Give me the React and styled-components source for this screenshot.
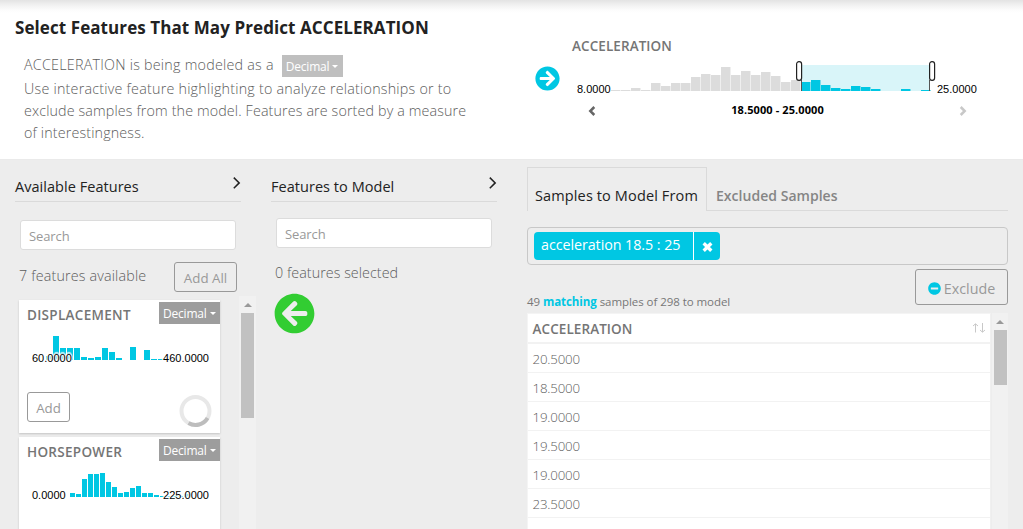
import React from 'react';
import styled, { createGlobalStyle } from 'styled-components';
import { FaArrowCircleLeft, FaArrowCircleRight, FaMinusCircle } from 'react-icons/fa';

const cyan = '#00c7e3';
const face = '"Open Sans", "Noto Sans", sans-serif';

const Global = createGlobalStyle`
  * { box-sizing: border-box; }
  body { margin: 0; background: #ededed; font-family: ${face}; color: #777; }
  svg { display: block; flex: none; }
`;

const Page = styled.div`
  height: 529px;
  overflow: hidden;
  background: #ededed;
`;

const Header = styled.header`
  display: flex;
  height: 159px;
  background: linear-gradient(#e3e3e3 0, #f1f1f1 5px, #fcfcfc 10px, #fff 13px);
`;

const Intro = styled.div`
  width: 535px;
  padding: 16px 0 0 15px;
`;

const Title = styled.h1`
  margin: 0;
  font-size: 17px;
  line-height: 24px;
  font-weight: 700;
  letter-spacing: 0.08px;
  color: #222;
  white-space: nowrap;
`;

const Copy = styled.div`
  padding: 15px 0 0 9px;
  font-size: 14.3px;
  font-weight: 300;
  color: #5c5c5c;
`;

const Line = styled.div`
  display: flex;
  align-items: flex-start;
  height: ${(p) => p.$h || 22}px;
  line-height: ${(p) => (p.$h ? 20 : 22)}px;
  white-space: nowrap;
  letter-spacing: ${(p) => p.$ls || 0}px;
`;

const TypeButton = styled.button`
  display: flex;
  align-items: center;
  gap: 3px;
  width: 61px;
  height: 22px;
  margin: ${(p) => p.$m || '0'};
  padding: 1px 0 0 4px;
  border: 0;
  background: ${(p) => (p.$pale ? '#bfbfbf' : '#9d9d9d')};
  color: #fff;
  font: 400 12px/21px ${face};
  letter-spacing: -0.2px;

  &::after {
    content: '';
    border: 3.5px solid transparent;
    border-top-color: #fff;
    border-bottom: 0;
  }
`;

const Target = styled.div`
  display: flex;
  color: ${cyan};
`;

const TargetIcon = styled.div`
  padding: 66px 0 0 0;
  width: 37px;
`;

const TargetBody = styled.div`
  padding-top: 36px;
  width: 410px;
`;

const FeatureName = styled.div`
  font-size: 13.5px;
  line-height: 20px;
  font-weight: 600;
  letter-spacing: ${(p) => p.$ls || 0}px;
  color: #757575;
  white-space: nowrap;
`;

const TargetChart = styled.div`
  display: flex;
  align-items: flex-end;
  height: 40px;
  padding-left: 5px;
  svg { margin-bottom: 4px; }
`;

const Tick = styled.span`
  width: ${(p) => p.$w || 'auto'};
  font: 400 11px/14px "Liberation Sans", sans-serif;
  color: #000;
`;

const RangeRow = styled.div`
  display: flex;
  align-items: center;
  justify-content: space-between;
  height: 22px;
  margin-top: 4px;
  padding: 0 15px 0 16px;
`;

const RangeText = styled.span`
  padding-bottom: 2px;
  font: 700 11px/14px ${face};
  letter-spacing: 0.1px;
  color: #000;
`;

const Body = styled.main`
  display: flex;
  height: 370px;
  padding-left: 15px;
  border-top: 1px solid #eaeaea;
`;

const Column = styled.section`
  width: 256px;
`;

const ColumnHead = styled.div`
  display: flex;
  justify-content: space-between;
  width: 226px;
  height: 42px;
  padding: 17px 0 0;
  border-bottom: 1px solid #dadada;
`;

const HeadText = styled.h2`
  margin: 0;
  font-size: 14.5px;
  line-height: 20px;
  font-weight: 500;
  letter-spacing: 0.04px;
  color: #222;
  white-space: nowrap;
`;

const Search = styled.input`
  display: block;
  width: 216px;
  height: 30px;
  margin: ${(p) => p.$top}px 0 0 5px;
  padding: 2px 8px 0;
  border: 1px solid #dcdcdc;
  border-radius: 3px;
  background: #fff;
  font: 400 13px ${face};
  letter-spacing: -0.1px;

  &::placeholder { color: #999; opacity: 1; }
`;

const CountRow = styled.div`
  display: flex;
  justify-content: space-between;
  width: 222px;
  margin-top: 12px;
  padding-left: 4px;
`;

const Count = styled.div`
  font-size: 14.3px;
  line-height: 20px;
  font-weight: 300;
  letter-spacing: ${(p) => p.$ls || 0}px;
  padding-top: ${(p) => p.$top || 0}px;
  color: #5c5c5c;
`;

const OutlineButton = styled.button`
  display: flex;
  align-items: center;
  justify-content: center;
  gap: 3px;
  width: ${(p) => p.$w}px;
  height: ${(p) => p.$h || 30}px;
  padding: 2px 0 0;
  border: 1px solid #999;
  border-radius: 3px;
  background: transparent;
  color: #999;
  font: 400 ${(p) => p.$size || 13.3}px ${face};
  svg { color: ${cyan}; }
`;

const FeatureList = styled.div`
  display: flex;
  height: 240px;
  margin-top: 4px;
  overflow: hidden;
`;

const Cards = styled.div`
  display: flex;
  flex-direction: column;
  gap: 4px;
  width: 224px;
  padding: 4px 0 0 4px;
`;

const Card = styled.article`
  flex: none;
  width: 201px;
  height: 133px;
  padding: 2px 0 0 8px;
  background: #fff;
  box-shadow: 0 1px 2px rgba(0, 0, 0, 0.18);
`;

const CardHead = styled.div`
  display: flex;
  justify-content: space-between;
  height: 28px;
  padding-top: 3px;
`;

const MiniPlot = styled.div`
  display: grid;
  height: 36px;
  > * { grid-area: 1 / 1; }
`;

const MiniTicks = styled.div`
  display: flex;
  justify-content: space-between;
  align-items: flex-end;
  padding: 0 11px 1px 5px;
  z-index: 1;
  ${Tick} {
    text-shadow: 0 0 1px #fff, 0 0 2px #fff, 0 0 2px #fff, 1px 0 1px #fff, -1px 0 1px #fff, 0 -2px 1px #fff, 0 0 3px #fff;
  }
`;

const CardFoot = styled.div`
  display: flex;
  justify-content: space-between;
  align-items: flex-start;
  padding: 26px 8px 0 0;
`;

const Spin = styled.div`
  padding-top: 3px;
`;

const Track = styled.div`
  display: flex;
  flex-direction: column;
  align-items: center;
  gap: 6px;
  width: ${(p) => p.$w}px;
  padding-top: 7px;
  background: #f1f1f1;

  &::before {
    content: '';
    border: 4px solid transparent;
    border-bottom-color: #999;
    border-top: 0;
  }
  &::after {
    content: '';
    width: 13px;
    height: ${(p) => p.$thumb}px;
    background: #c1c1c1;
  }
`;

const GreenArrow = styled.div`
  margin: 10px 0 0 3px;
  color: #32cd32;
`;

const Samples = styled.section`
  width: 481px;
`;

const Tabs = styled.div`
  display: flex;
  height: 51px;
  padding-top: 7px;
`;

const Tab = styled.div`
  width: ${(p) => (p.$active ? '180px' : 'auto')};
  flex: ${(p) => (p.$active ? 'none' : 1)};
  padding: ${(p) => (p.$active ? '18px 0 0 7px' : '19px 0 0 9px')};
  border: 1px solid #dadada;
  border-width: ${(p) => (p.$active ? '1px 1px 0 1px' : '0 0 1px 0')};
  font-size: ${(p) => (p.$active ? 14.5 : 14)}px;
  line-height: 20px;
  font-weight: ${(p) => (p.$active ? 500 : 600)};
  letter-spacing: ${(p) => (p.$active ? 0.13 : 0.03)}px;
  color: ${(p) => (p.$active ? '#222' : '#858585')};
  white-space: nowrap;
`;

const FilterBox = styled.div`
  height: 38px;
  margin-top: 16px;
  padding: 4px 6px;
  border: 1px solid #c8c8c8;
  border-radius: 4px;
`;

const Tag = styled.div`
  display: flex;
  width: 186px;
  height: 28px;
  border-radius: 4px;
  background: ${cyan};
  color: #fff;
  font-size: 14.3px;
  line-height: 25px;
`;

const TagText = styled.div`
  width: 160px;
  padding-left: 7px;
  border-right: 1px solid #fff;
  letter-spacing: -0.06px;
  white-space: nowrap;
`;

const TagClose = styled.div`
  padding: 10px 0 0 8px;
`;

const Summary = styled.div`
  display: flex;
  justify-content: space-between;
  height: 48px;
  padding-top: 4px;
`;

const Matching = styled.div`
  padding-top: 24px;
  font-size: 11.5px;
  line-height: 18px;
  font-weight: 400;
  letter-spacing: -0.06px;
  b { color: ${cyan}; font-weight: 700; }
`;

const TableWrap = styled.div`
  display: flex;
  justify-content: space-between;
  height: 217px;
  overflow: hidden;
  border-left: 1px solid #f4f4f4;
`;

const Table = styled.div`
  width: 463px;
  background: #fff;
  border-top: 1px solid #f4f4f4;
  border-right: 1px solid #f0f0f0;
`;

const TableHead = styled.div`
  display: flex;
  justify-content: space-between;
  height: 30px;
  padding: 5px 4px 0 4.5px;
  border-bottom: 2px solid #f2f2f2;
  svg { margin-top: 4px; }
`;

const Row = styled.div`
  height: 29px;
  padding: 1px 0 0 4.5px;
  border-bottom: 1px solid #f2f2f2;
  font-size: 13.3px;
  line-height: 28px;
  font-weight: 300;
  letter-spacing: -0.2px;
  color: #5c5c5c;
`;

function Bars({ data, pitch, base, split = 0, gapShade }) {
  return data.map((h, i) => {
    const on = i >= split;
    return h ? (
      <g key={i}>
        {gapShade && <rect x={i * pitch} y={base - h} width={pitch} height={h} fill={on ? '#7fdcea' : '#efefef'} />}
        <rect x={i * pitch} y={base - h} width={pitch - 1} height={h} fill={on ? cyan : '#dcdcdc'} />
      </g>
    ) : null;
  });
}

const targetData = [1, 1, 3, 1, 8, 5, 8, 8, 14, 17, 16, 24, 16, 20, 16, 19, 15, 9, 11, 9, 11, 6, 3, 2, 5, 4, 2, 0, 0, 2, 0, 1];

function TargetPlot() {
  return (
    <svg width="326" height="32" viewBox="0 0 326 32">
      <rect x="190" y="5" width="128" height="26" fill="#d9f5f9" />
      <Bars data={targetData} pitch={10} base={31} split={19} gapShade />
      <path d="M190.5 20V31M318.5 20V31" stroke="#555" />
      <rect x="185.6" y="1.6" width="5" height="18.8" rx="2.4" fill="#fff" stroke="#222" strokeWidth="1.2" />
      <rect x="318.6" y="1.6" width="5" height="18.8" rx="2.4" fill="#fff" stroke="#222" strokeWidth="1.2" />
    </svg>
  );
}

const Angle = ({ left, color }) => (
  <svg width="8" height="10" viewBox="0 0 8 10">
    <path d={left ? 'M6.3 1L2.3 5L6.3 9' : 'M1.7 1L5.7 5L1.7 9'} fill="none" stroke={color} strokeWidth="2.5" />
  </svg>
);

const Chevron = () => (
  <svg width="9" height="13" viewBox="0 0 9 13">
    <path d="M1.8 0.6L7.2 5.9L1.8 11.2" fill="none" stroke="#222" strokeWidth="1.5" />
  </svg>
);

const Cross = () => (
  <svg width="11" height="10" viewBox="0 0 11 10">
    <path d="M1.7 1.3L9.3 8.7M9.3 1.3L1.7 8.7" stroke="#fff" strokeWidth="3.4" />
  </svg>
);

const SortArrows = () => (
  <svg width="14" height="10" viewBox="0 0 14 10">
    <path d="M3.5 9.5V1M1 3L3.5 0.8L6 3M10.5 0V9M8 7L10.5 9.2L13 7" fill="none" stroke="#c8c8c8" />
  </svg>
);

const Spinner = () => (
  <svg width="33" height="33" viewBox="0 0 33 33">
    <circle cx="16.5" cy="16" r="14" fill="none" stroke="#e8e8e8" strokeWidth="4" />
    <path d="M28.6 23A14 14 0 0 1 9.5 28.1" fill="none" stroke="#bdbdbd" strokeWidth="4" />
  </svg>
);

const features = [
  { name: 'DISPLACEMENT', ls: 0.3, min: '60.0000', max: '460.0000', start: 19, pitch: 7,
    data: [4, 24, 12, 12, 12, 3, 2, 3, 12, 8, 2, 0, 13, 0, 10, 1, 1, 1, 1, 0, 1] },
  { name: 'HORSEPOWER', ls: 0.3, min: '0.0000', max: '225.0000', start: 43, pitch: 6,
    data: [4, 3, 18, 23, 23, 24, 15, 10, 4, 5, 9, 11, 4, 4, 2, 1, 1, 1, 1, 3] },
];

const samples = ['20.5000', '18.5000', '19.0000', '19.5000', '19.0000', '23.5000', '18.5000'];

export default function App() {
  return (
    <Page>
      <Global />
      <Header>
        <Intro>
          <Title>Select Features That May Predict ACCELERATION</Title>
          <Copy>
            <Line $h={23} $ls={0.24}>
              ACCELERATION is being modeled as a
              <TypeButton $pale $m="0 0 0 8px">Decimal</TypeButton>
            </Line>
            <Line $ls={0.23}>Use interactive feature highlighting to analyze relationships or to</Line>
            <Line $ls={0.13}>exclude samples from the model. Features are sorted by a measure</Line>
            <Line $ls={0.15}>of interestingness.</Line>
          </Copy>
        </Intro>
        <Target>
          <TargetIcon><FaArrowCircleRight size={25} /></TargetIcon>
          <TargetBody>
            <FeatureName $ls={0.08}>ACCELERATION</FeatureName>
            <TargetChart>
              <Tick $w="34px">8.0000</Tick>
              <TargetPlot />
              <Tick>25.0000</Tick>
            </TargetChart>
            <RangeRow>
              <Angle left color="#666" />
              <RangeText>18.5000 - 25.0000</RangeText>
              <Angle color="#c8c8c8" />
            </RangeRow>
          </TargetBody>
        </Target>
      </Header>
      <Body>
        <Column>
          <ColumnHead>
            <HeadText>Available Features</HeadText>
            <Chevron />
          </ColumnHead>
          <Search placeholder="Search" $top={18} />
          <CountRow>
            <Count $top={4} $ls={0.17}>7 features available</Count>
            <OutlineButton $w={63}>Add All</OutlineButton>
          </CountRow>
          <FeatureList>
            <Cards>
              {features.map((f) => (
                <Card key={f.name}>
                  <CardHead>
                    <FeatureName $ls={f.ls}>{f.name}</FeatureName>
                    <TypeButton $m="-3px 0 0 0">Decimal</TypeButton>
                  </CardHead>
                  <MiniPlot>
                    <svg width="193" height="36">
                      <g transform={`translate(${f.start} 0)`}>
                        <Bars data={f.data} pitch={f.pitch} base={30} />
                      </g>
                    </svg>
                    <MiniTicks><Tick>{f.min}</Tick><Tick>{f.max}</Tick></MiniTicks>
                  </MiniPlot>
                  <CardFoot>
                    <OutlineButton $w={43}>Add</OutlineButton>
                    <Spin><Spinner /></Spin>
                  </CardFoot>
                </Card>
              ))}
            </Cards>
            <Track $w={17} $thumb={105} />
          </FeatureList>
        </Column>
        <Column>
          <ColumnHead>
            <HeadText>Features to Model</HeadText>
            <Chevron />
          </ColumnHead>
          <Search placeholder="Search" $top={16} />
          <CountRow>
            <Count $top={3} $ls={0.05}>0 features selected</Count>
          </CountRow>
          <GreenArrow><FaArrowCircleLeft size={41} /></GreenArrow>
        </Column>
        <Samples>
          <Tabs>
            <Tab $active>Samples to Model From</Tab>
            <Tab>Excluded Samples</Tab>
          </Tabs>
          <FilterBox>
            <Tag>
              <TagText>acceleration 18.5 : 25</TagText>
              <TagClose><Cross /></TagClose>
            </Tag>
          </FilterBox>
          <Summary>
            <Matching>49 <b>matching</b> samples of 298 to model</Matching>
            <OutlineButton $w={93} $h={36} $size={14.3}><FaMinusCircle size={13} />Exclude</OutlineButton>
          </Summary>
          <TableWrap>
            <Table>
              <TableHead><FeatureName $ls={0.08}>ACCELERATION</FeatureName><SortArrows /></TableHead>
              {samples.map((v, i) => <Row key={i}>{v}</Row>)}
            </Table>
            <Track $w={16} $thumb={55} />
          </TableWrap>
        </Samples>
      </Body>
    </Page>
  );
}
